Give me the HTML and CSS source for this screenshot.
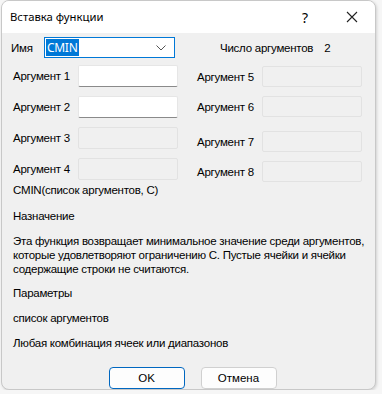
FILE: index.html
```html
<!DOCTYPE html>
<html lang="ru">
<head>
    <meta charset="UTF-8">
    <title>Вставка функции</title>
    <link rel="stylesheet" href="styles.css">
</head>
<body>
    <div class="dialog">
        <div class="titlebar">
            <span class="title">Вставка функции</span>
            <span class="help">?</span>
            <span class="close">
                <svg width="12" height="12" viewBox="0 0 12 12"><path d="M1 1 L11 11 M11 1 L1 11" stroke="#222" stroke-width="1.1" fill="none"/></svg>
            </span>
        </div>

        <div class="content">
            <div class="name-row">
                <span class="name-label">Имя</span>
                <div class="combo">
                    <span class="combo-value">CMIN</span>
                    <svg class="combo-arrow" width="10" height="6" viewBox="0 0 10 6"><path d="M0.5 0.5 L5 5 L9.5 0.5" stroke="#555" fill="none"/></svg>
                </div>
                <span class="arg-count">Число аргументов</span>
                <span class="arg-count-num">2</span>
            </div>

            <div class="args">
                <div class="arg-col left">
                    <div class="arg"><label>Аргумент 1</label><input type="text"></div>
                    <div class="arg"><label>Аргумент 2</label><input type="text"></div>
                    <div class="arg"><label>Аргумент 3</label><input type="text" disabled></div>
                    <div class="arg"><label>Аргумент 4</label><input type="text" disabled></div>
                </div>
                <div class="arg-col right">
                    <div class="arg"><label>Аргумент 5</label><input type="text" disabled></div>
                    <div class="arg"><label>Аргумент 6</label><input type="text" disabled></div>
                    <div class="arg arg-7"><label>Аргумент 7</label><input type="text" disabled></div>
                    <div class="arg"><label>Аргумент 8</label><input type="text" disabled></div>
                </div>
            </div>

            <div class="info">
                <p class="syntax">CMIN(список аргументов, С)</p>
                <p>Назначение</p>
                <p class="desc">Эта функция возвращает минимальное значение среди аргументов, которые удовлетворяют ограничению С. Пустые ячейки и ячейки содержащие строки не считаются.</p>
                <p>Параметры</p>
                <p>список аргументов</p>
                <p>Любая комбинация ячеек или диапазонов</p>
            </div>

            <div class="buttons">
                <button class="btn default">OK</button>
                <button class="btn">Отмена</button>
            </div>
        </div>
    </div>
</body>
</html>
```

FILE: styles.css
```css
body {
    margin: 0;
    background-color: #f6f6f6;
    font-family: "Liberation Sans", Arial, sans-serif;
    font-size: 11.5px;
    letter-spacing: -0.25px;
    color: #000;
}
.dialog {
    width: 375px;
    height: 390px;
    margin-left: 1px;
    background: #f0f0f0;
    border: 1px solid #c8c8c8;
    border-radius: 8px;
    overflow: hidden;
    box-sizing: border-box;
    box-shadow: 1px 1px 3px rgba(0,0,0,0.15);
}
.titlebar {
    height: 32px;
    background: #fff;
    display: flex;
    align-items: center;
    padding-left: 8px;
    font-family: "Noto Sans", "Open Sans", sans-serif;
    font-size: 11.3px;
    letter-spacing: 0;
}
.title {
    flex: 1;
    margin-top: -1px;
}
.help {
    width: 46px;
    text-align: center;
    font-size: 14px;
    margin-right: 1px;
}
.close {
    width: 46px;
    display: flex;
    justify-content: center;
}
.content {
    padding: 4px 0 0 0;
}
.name-row {
    display: flex;
    align-items: center;
    height: 21px;
}
.name-label {
    margin-left: 9px;
    width: 33px;
}
.combo {
    width: 131px;
    height: 21px;
    box-sizing: border-box;
    border: 1px solid #0078d7;
    background: #fff;
    display: flex;
    align-items: center;
    padding: 0 8px 0 1px;
}
.combo-value {
    background: #0078d7;
    color: #fff;
    padding: 1px 2px 1px 1px;
    line-height: 15px;
    font-family: "Noto Sans", sans-serif;
    font-size: 12px;
    letter-spacing: -0.3px;
}
.combo-arrow {
    margin-left: auto;
}
.arg-count {
    margin-left: 45px;
}
.arg-count-num {
    margin-left: 11px;
}
.args {
    display: flex;
    margin-top: 7px;
}
.arg-col {
    display: flex;
    flex-direction: column;
}
.arg-col.left {
    margin-left: 11px;
    gap: 9px;
}
.arg-col.right {
    margin-left: 19px;
    margin-top: 1px;
    gap: 9px;
}
.arg-col.right .arg {
    height: 21px;
}
.arg-col.right .arg-7 {
    margin-top: 5px;
}
.arg {
    display: flex;
    align-items: center;
    height: 22px;
}
.arg label {
    width: 65px;
}
.arg input {
    width: 100px;
    height: 100%;
    box-sizing: border-box;
    border: 1px solid #e6e6e6;
    border-bottom: 1px solid #8a8a8a;
    background: #fff;
    border-radius: 2px;
    padding: 0 4px;
    font: inherit;
}
.arg input:disabled {
    background: #f0f0f0;
    border: 1px solid #e2e2e2;
}
.info {
    padding: 0 0 0 11px;
    margin-top: 1px;
}
.info p {
    margin: 0 0 11px;
    line-height: 14px;
}
.info .syntax {
    margin-bottom: 12px;
}
.info .desc {
    margin-bottom: 10px;
}
.buttons {
    display: flex;
    justify-content: center;
    gap: 16px;
    margin-top: 17px;
    padding-left: 8px;
}
.btn {
    width: 76px;
    height: 22px;
    font: inherit;
    background: #fdfdfd;
    border: 1px solid #d0d0d0;
    border-radius: 4px;
    cursor: pointer;
}
.btn.default {
    border: 1px solid #0067c0;
}
```
